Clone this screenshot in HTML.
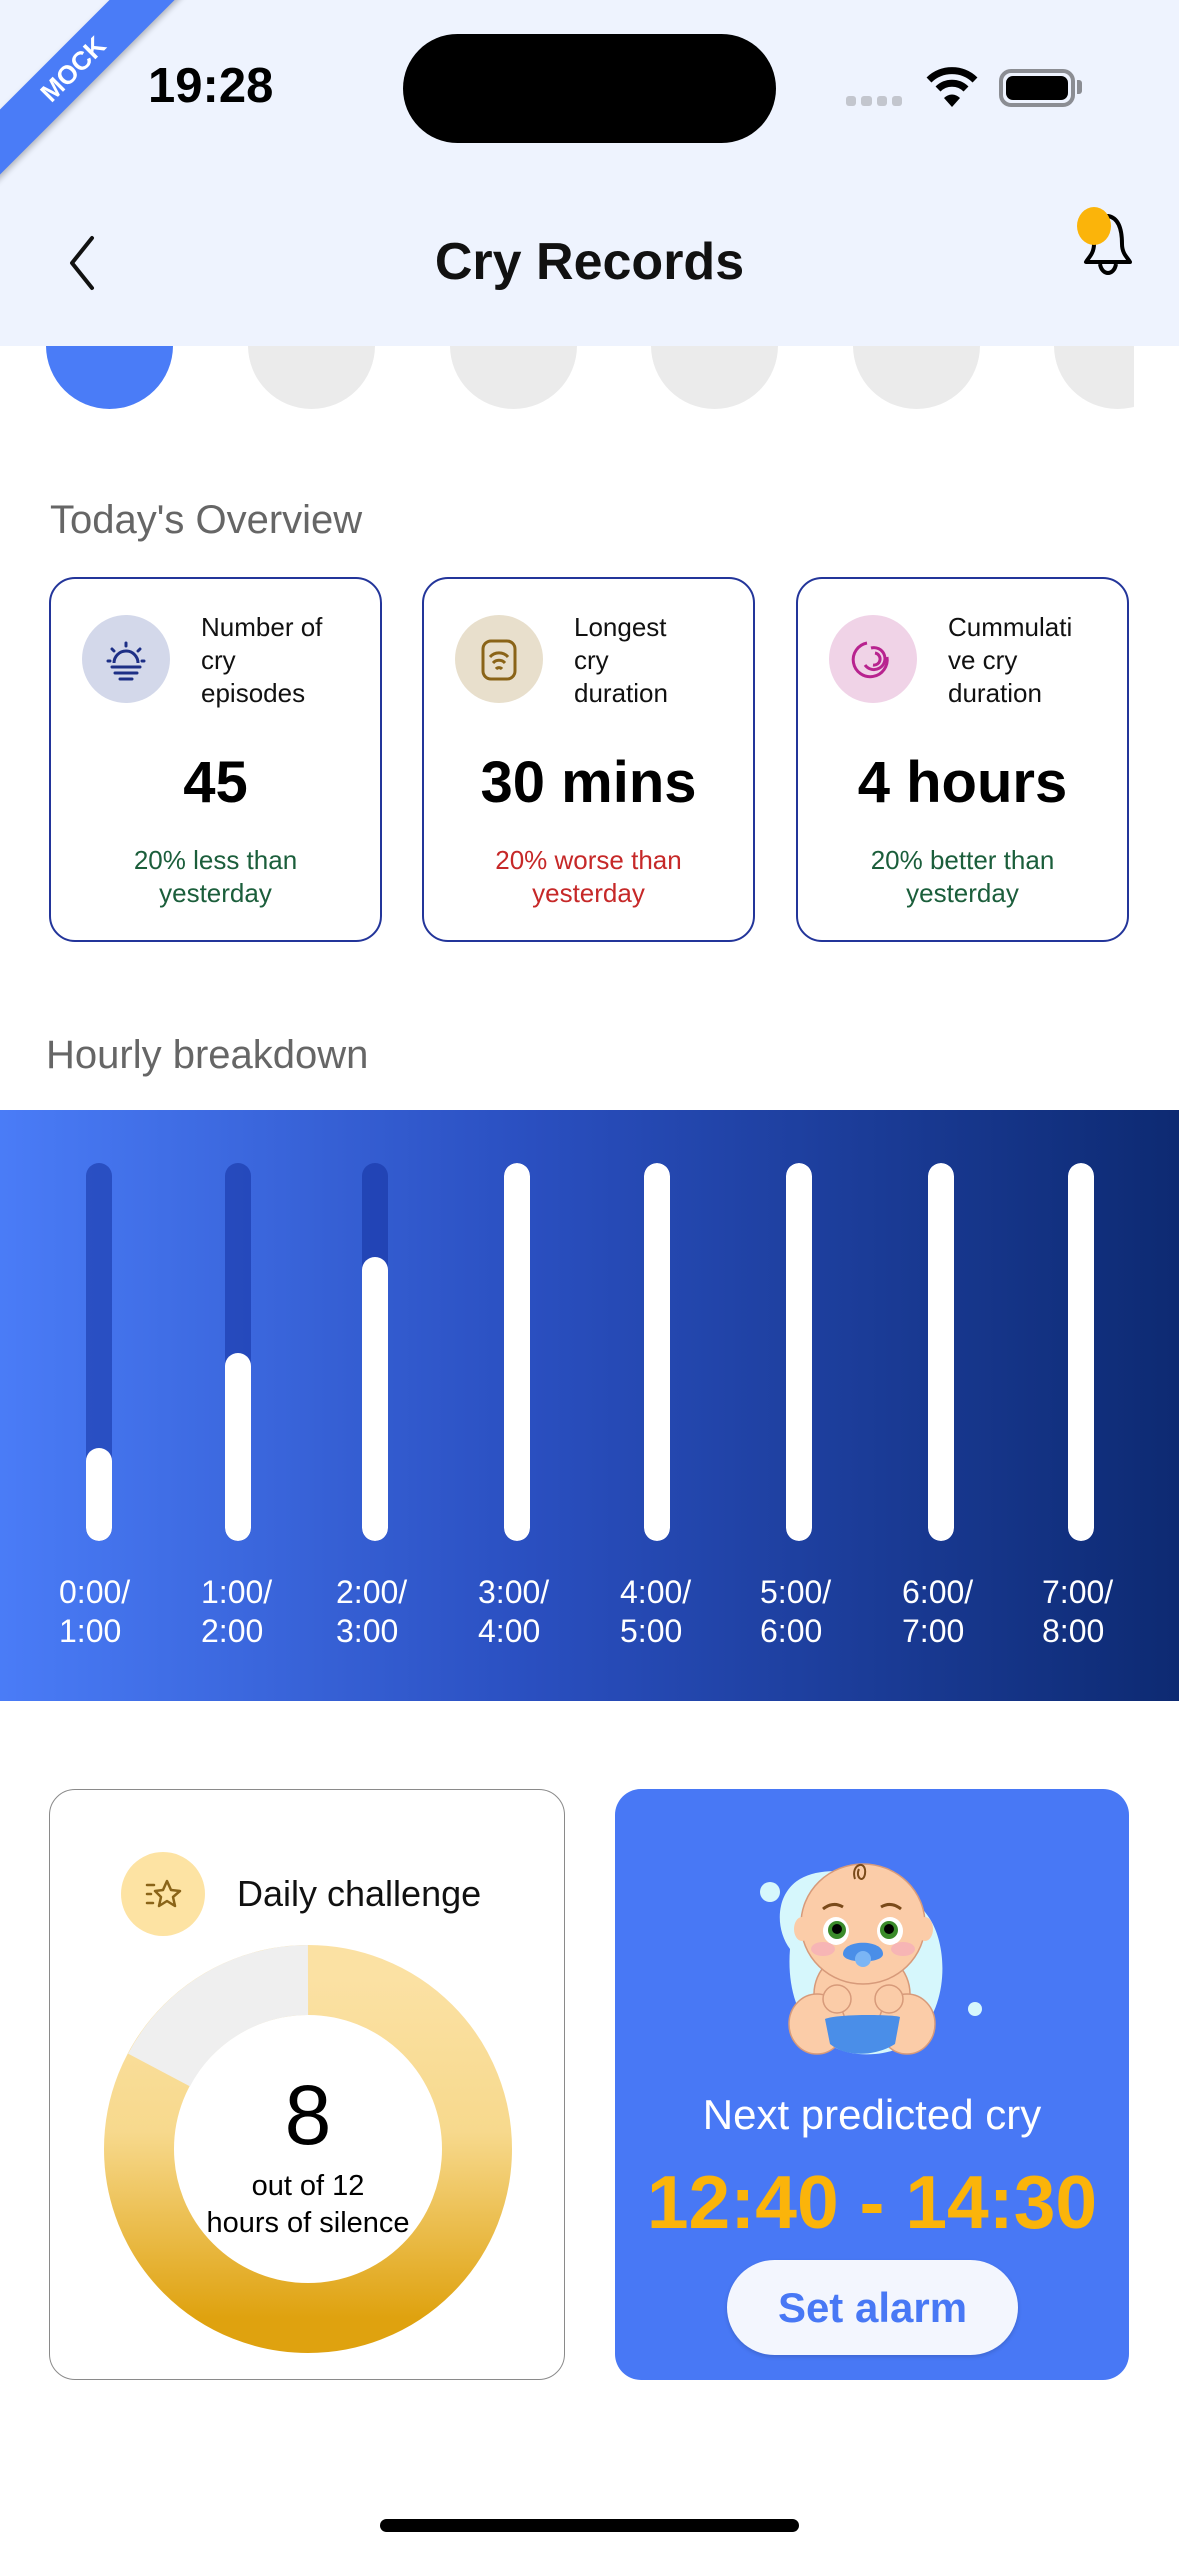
<!DOCTYPE html>
<html><head><meta charset="utf-8">
<style>
*{margin:0;padding:0;box-sizing:border-box}
body{width:1179px;height:2556px;background:#fff;font-family:"Liberation Sans",sans-serif;position:relative;overflow:hidden;color:#000}
.abs{position:absolute}
.card{position:absolute;top:577px;width:333px;height:365px;border:2px solid #23359a;border-radius:26px;background:#fff}
.ic{position:absolute;left:31px;top:36px;width:88px;height:88px;border-radius:50%}
.lbl{position:absolute;left:150px;top:32px;font-size:26px;line-height:33px;color:#111}
.val{position:absolute;left:0;right:0;top:170px;text-align:center;font-size:58px;font-weight:bold}
.sub{position:absolute;left:0;right:0;top:265px;text-align:center;font-size:26px;line-height:33px}
.track{position:absolute;top:1163px;width:26px;height:378px;border-radius:13px;background:rgba(20,50,160,0.55);overflow:hidden}
.fill{position:absolute;left:0;right:0;bottom:0;background:#fff;border-radius:13px}
.hl{position:absolute;top:1573px;font-size:32px;line-height:39px;color:#fff}
</style></head><body>
<div class="abs" style="left:0;top:0;width:1179px;height:346px;background:#eef3fe"></div>
<!-- mock ribbon -->
<div class="abs" style="left:-77px;top:46px;width:300px;height:46px;background:#4a7cf7;transform:rotate(-45deg);transform-origin:center;color:#fff;font-weight:bold;font-size:26px;text-align:center;line-height:46px;box-shadow:0 3px 6px rgba(0,0,0,.25)">MOCK</div>
<div class="abs" style="left:148px;top:58px;font-size:49px;font-weight:bold">19:28</div>
<div class="abs" style="left:403px;top:34px;width:373px;height:109px;background:#000;border-radius:55px"></div>
<div class="abs" style="left:846px;top:96px;width:56px;height:10px;display:flex;gap:5px"><i style="flex:1;background:#c3c6ce;border-radius:3px"></i><i style="flex:1;background:#c3c6ce;border-radius:3px"></i><i style="flex:1;background:#c3c6ce;border-radius:3px"></i><i style="flex:1;background:#c3c6ce;border-radius:3px"></i></div>
<svg class="abs" style="left:926px;top:66px" width="52" height="42" viewBox="0 0 52 42"><path d="M3 14 A33 33 0 0 1 49 14" stroke="#000" stroke-width="7" fill="none"/><path d="M12 23 A20 20 0 0 1 40 23" stroke="#000" stroke-width="7" fill="none"/><path d="M26 41 L18 32 A11 11 0 0 1 34 32 Z" fill="#000"/></svg>
<div class="abs" style="left:999px;top:69px;width:76px;height:38px;border:4px solid #8b8d93;border-radius:12px;padding:3px"><div style="width:100%;height:100%;background:#000;border-radius:7px"></div></div>
<div class="abs" style="left:1077px;top:80px;width:5px;height:14px;background:#8b8d93;border-radius:0 3px 3px 0"></div>
<!-- nav -->
<svg class="abs" style="left:64px;top:234px" width="36" height="58" viewBox="0 0 36 58"><path d="M28 4 L8 29 L28 54" stroke="#111" stroke-width="4" fill="none" stroke-linecap="round" stroke-linejoin="round"/></svg>
<div class="abs" style="left:0;width:1179px;top:232px;text-align:center;font-size:52px;font-weight:bold;color:#111">Cry Records</div>
<svg class="abs" style="left:1076px;top:206px" width="64" height="76" viewBox="0 0 64 76"><path d="M32 10 C20 12 18 26 18 38 C18 48 12 52 10 56 L54 56 C52 52 46 48 46 38 C46 26 44 12 32 10 Z" stroke="#000" stroke-width="4" fill="none" stroke-linejoin="round"/><path d="M24 58 C26 70 38 70 40 58" stroke="#000" stroke-width="4" fill="none"/></svg>
<div class="abs" style="left:1077px;top:207px;width:34px;height:38px;border-radius:50%;background:#fbb40a"></div>
<!-- circles -->
<div class="abs" style="left:0;top:346px;width:1134px;height:70px;overflow:hidden">
<div class="abs" style="left:46px;top:-64px;width:127px;height:127px;border-radius:50%;background:#4a7cf7"></div>
<div class="abs" style="left:248px;top:-64px;width:127px;height:127px;border-radius:50%;background:#ebebeb"></div>
<div class="abs" style="left:450px;top:-64px;width:127px;height:127px;border-radius:50%;background:#ebebeb"></div>
<div class="abs" style="left:651px;top:-64px;width:127px;height:127px;border-radius:50%;background:#ebebeb"></div>
<div class="abs" style="left:853px;top:-64px;width:127px;height:127px;border-radius:50%;background:#ebebeb"></div>
<div class="abs" style="left:1054px;top:-64px;width:127px;height:127px;border-radius:50%;background:#ebebeb"></div>
</div>
<div class="abs" style="left:50px;top:498px;font-size:40px;color:#666">Today's Overview</div>
<!-- cards -->
<div class="card" style="left:49px">
 <div class="ic" style="background:#d3d8ea"><svg width="88" height="88" viewBox="0 0 88 88"><path d="M32 48 A12 12 0 0 1 56 48" stroke="#1d2f86" stroke-width="3" fill="none"/><path d="M30 52 H58 M33 58 H55 M38 64 H50" stroke="#1d2f86" stroke-width="3" stroke-linecap="round"/><path d="M44 28 V31 M30 34 L32 36 M58 34 L56 36 M26 46 H28 M60 46 H62" stroke="#1d2f86" stroke-width="3" stroke-linecap="round"/></svg></div>
 <div class="lbl">Number of<br>cry<br>episodes</div>
 <div class="val">45</div>
 <div class="sub" style="color:#1b5e3b">20% less than<br>yesterday</div>
</div>
<div class="card" style="left:422px">
 <div class="ic" style="background:#e8dfcc"><svg width="88" height="88" viewBox="0 0 88 88"><rect x="28" y="26" width="32" height="38" rx="8" stroke="#8a6418" stroke-width="3" fill="none"/><path d="M35 42 A12 12 0 0 1 53 42 M38 48 A8 8 0 0 1 50 48 M41 54 A4 4 0 0 1 47 54" stroke="#8a6418" stroke-width="3" fill="none"/></svg></div>
 <div class="lbl">Longest<br>cry<br>duration</div>
 <div class="val">30 mins</div>
 <div class="sub" style="color:#c62828">20% worse than<br>yesterday</div>
</div>
<div class="card" style="left:796px">
 <div class="ic" style="background:#f0d3e7"><svg width="88" height="88" viewBox="0 0 88 88"><path d="M38 28 A17 17 0 1 0 58 42" stroke="#b8238f" stroke-width="3" fill="none"/><path d="M42 33 A11 11 0 1 1 36 50" stroke="#b8238f" stroke-width="3" fill="none"/><path d="M46 38 A6 6 0 0 1 44 50" stroke="#b8238f" stroke-width="3" fill="none"/></svg></div>
 <div class="lbl">Cummulati<br>ve cry<br>duration</div>
 <div class="val">4 hours</div>
 <div class="sub" style="color:#1b5e3b">20% better than<br>yesterday</div>
</div>
<div class="abs" style="left:46px;top:1033px;font-size:40px;color:#666">Hourly breakdown</div>
<div class="abs" style="left:0;top:1110px;width:1179px;height:591px;background:linear-gradient(90deg,#4a7cf7 0%,#2a4fc0 45%,#0d2a72 100%)"></div>
<div class="track" style="left:86px"><div class="fill" style="height:93px"></div></div>
<div class="track" style="left:225px"><div class="fill" style="height:188px"></div></div>
<div class="track" style="left:362px"><div class="fill" style="height:284px"></div></div>
<div class="track" style="left:504px"><div class="fill" style="height:378px"></div></div>
<div class="track" style="left:644px"><div class="fill" style="height:378px"></div></div>
<div class="track" style="left:786px"><div class="fill" style="height:378px"></div></div>
<div class="track" style="left:928px"><div class="fill" style="height:378px"></div></div>
<div class="track" style="left:1068px"><div class="fill" style="height:378px"></div></div>
<div class="hl" style="left:59px">0:00/<br>1:00</div>
<div class="hl" style="left:201px">1:00/<br>2:00</div>
<div class="hl" style="left:336px">2:00/<br>3:00</div>
<div class="hl" style="left:478px">3:00/<br>4:00</div>
<div class="hl" style="left:620px">4:00/<br>5:00</div>
<div class="hl" style="left:760px">5:00/<br>6:00</div>
<div class="hl" style="left:902px">6:00/<br>7:00</div>
<div class="hl" style="left:1042px">7:00/<br>8:00</div>
<!-- daily challenge -->
<div class="abs" style="left:49px;top:1789px;width:516px;height:591px;border:1.5px solid #8a8a8a;border-radius:26px;background:#fff">
 <div class="abs" style="left:71px;top:62px;width:84px;height:84px;border-radius:50%;background:#fde3a3"><svg width="84" height="84" viewBox="0 0 84 84"><path d="M46 29 L50 38 L59 39 L52 45 L54 54 L46 49 L38 54 L40 45 L34 39 L42 38 Z" stroke="#8a6418" stroke-width="2.5" fill="none" stroke-linejoin="round"/><path d="M26 33 H33 M26 42 H30 M26 51 H32" stroke="#8a6418" stroke-width="2.5" stroke-linecap="round"/></svg></div>
 <div class="abs" style="left:187px;top:83px;font-size:36px;color:#111">Daily challenge</div>
 <svg class="abs" style="left:0;top:0" width="516" height="591" viewBox="0 0 516 591"><defs><linearGradient id="g" x1="0" y1="0" x2="0" y2="1"><stop offset="0" stop-color="#fbe1a3"/><stop offset="0.45" stop-color="#f7d98d"/><stop offset="1" stop-color="#dfa20f"/></linearGradient></defs>
 <circle cx="258" cy="359" r="169" stroke="url(#g)" stroke-width="70" fill="none"/>
 <path d="M258 190 A169 169 0 0 0 109 280" stroke="#efefef" stroke-width="70" fill="none"/>
 </svg>
 <div class="abs" style="left:0;width:516px;top:275px;text-align:center;font-size:84px;line-height:100px">8</div>
 <div class="abs" style="left:0;width:516px;top:378px;text-align:center;font-size:29px;line-height:37px">out of 12<br>hours of silence</div>
</div>
<!-- prediction -->
<div class="abs" style="left:615px;top:1789px;width:514px;height:591px;border-radius:26px;background:#4878f5">
 <svg class="abs" style="left:140px;top:50px" width="240" height="220" viewBox="0 0 240 220">
  <circle cx="15" cy="53" r="10" fill="#d6f7fc"/><circle cx="220" cy="170" r="7" fill="#d6f7fc"/>
  <path d="M45 40 C80 20 150 40 175 80 C200 120 190 210 120 215 C60 220 30 170 35 110 C20 90 20 55 45 40 Z" fill="#d6f7fc"/>
  <ellipse cx="107" cy="155" rx="48" ry="45" fill="#fbcca8" stroke="#d79a7a" stroke-width="1.5"/>
  <ellipse cx="62" cy="185" rx="28" ry="30" fill="#fbcca8" stroke="#d79a7a" stroke-width="1.5"/>
  <ellipse cx="152" cy="185" rx="28" ry="30" fill="#fbcca8" stroke="#d79a7a" stroke-width="1.5"/>
  <path d="M70 180 C80 175 135 175 145 178 L140 205 C120 218 90 218 75 205 Z" fill="#4a8ee8"/>
  <circle cx="82" cy="160" r="14" fill="#fbcca8" stroke="#d79a7a" stroke-width="1.5"/><circle cx="134" cy="160" r="14" fill="#fbcca8" stroke="#d79a7a" stroke-width="1.5"/>
  <ellipse cx="108" cy="85" rx="62" ry="60" fill="#fbcca8" stroke="#d79a7a" stroke-width="1.5"/>
  <ellipse cx="47" cy="90" rx="8" ry="12" fill="#fbcca8"/><ellipse cx="170" cy="90" rx="8" ry="12" fill="#fbcca8"/>
  <ellipse cx="81" cy="92" rx="13" ry="14" fill="#fff"/><circle cx="82" cy="91" r="9" fill="#3a8a2a"/><circle cx="82" cy="90" r="5" fill="#000"/>
  <ellipse cx="135" cy="92" rx="13" ry="14" fill="#fff"/><circle cx="134" cy="91" r="9" fill="#3a8a2a"/><circle cx="134" cy="90" r="5" fill="#000"/>
  <path d="M68 70 Q78 62 88 68 M126 68 Q136 62 146 70" stroke="#7a4a1a" stroke-width="3" fill="none"/>
  <path d="M100 40 C95 25 112 20 110 35 C108 45 100 38 104 30" stroke="#7a4a1a" stroke-width="2" fill="none"/>
  <ellipse cx="68" cy="110" rx="12" ry="7" fill="#f7b5b5"/><ellipse cx="148" cy="110" rx="12" ry="7" fill="#f7b5b5"/>
  <path d="M88 115 C88 100 128 100 128 115 C128 125 88 125 88 115 Z" fill="#4a8ee8"/><circle cx="108" cy="120" r="8" fill="#7bb5f5"/>
 </svg>
 <div class="abs" style="left:0;width:514px;top:302px;text-align:center;font-size:42px;color:#fff">Next predicted cry</div>
 <div class="abs" style="left:0;width:514px;top:370px;text-align:center;font-size:75px;font-weight:bold;color:#fbb40a">12:40 - 14:30</div>
 <div class="abs" style="left:112px;top:471px;width:291px;height:95px;border-radius:48px;background:#f3f6fe;text-align:center;line-height:95px;font-size:42px;font-weight:bold;color:#4878f5;box-shadow:0 2px 4px rgba(0,0,0,.15)">Set alarm</div>
</div>
<div class="abs" style="left:380px;top:2519px;width:419px;height:13px;border-radius:7px;background:#000"></div>
</body></html>
